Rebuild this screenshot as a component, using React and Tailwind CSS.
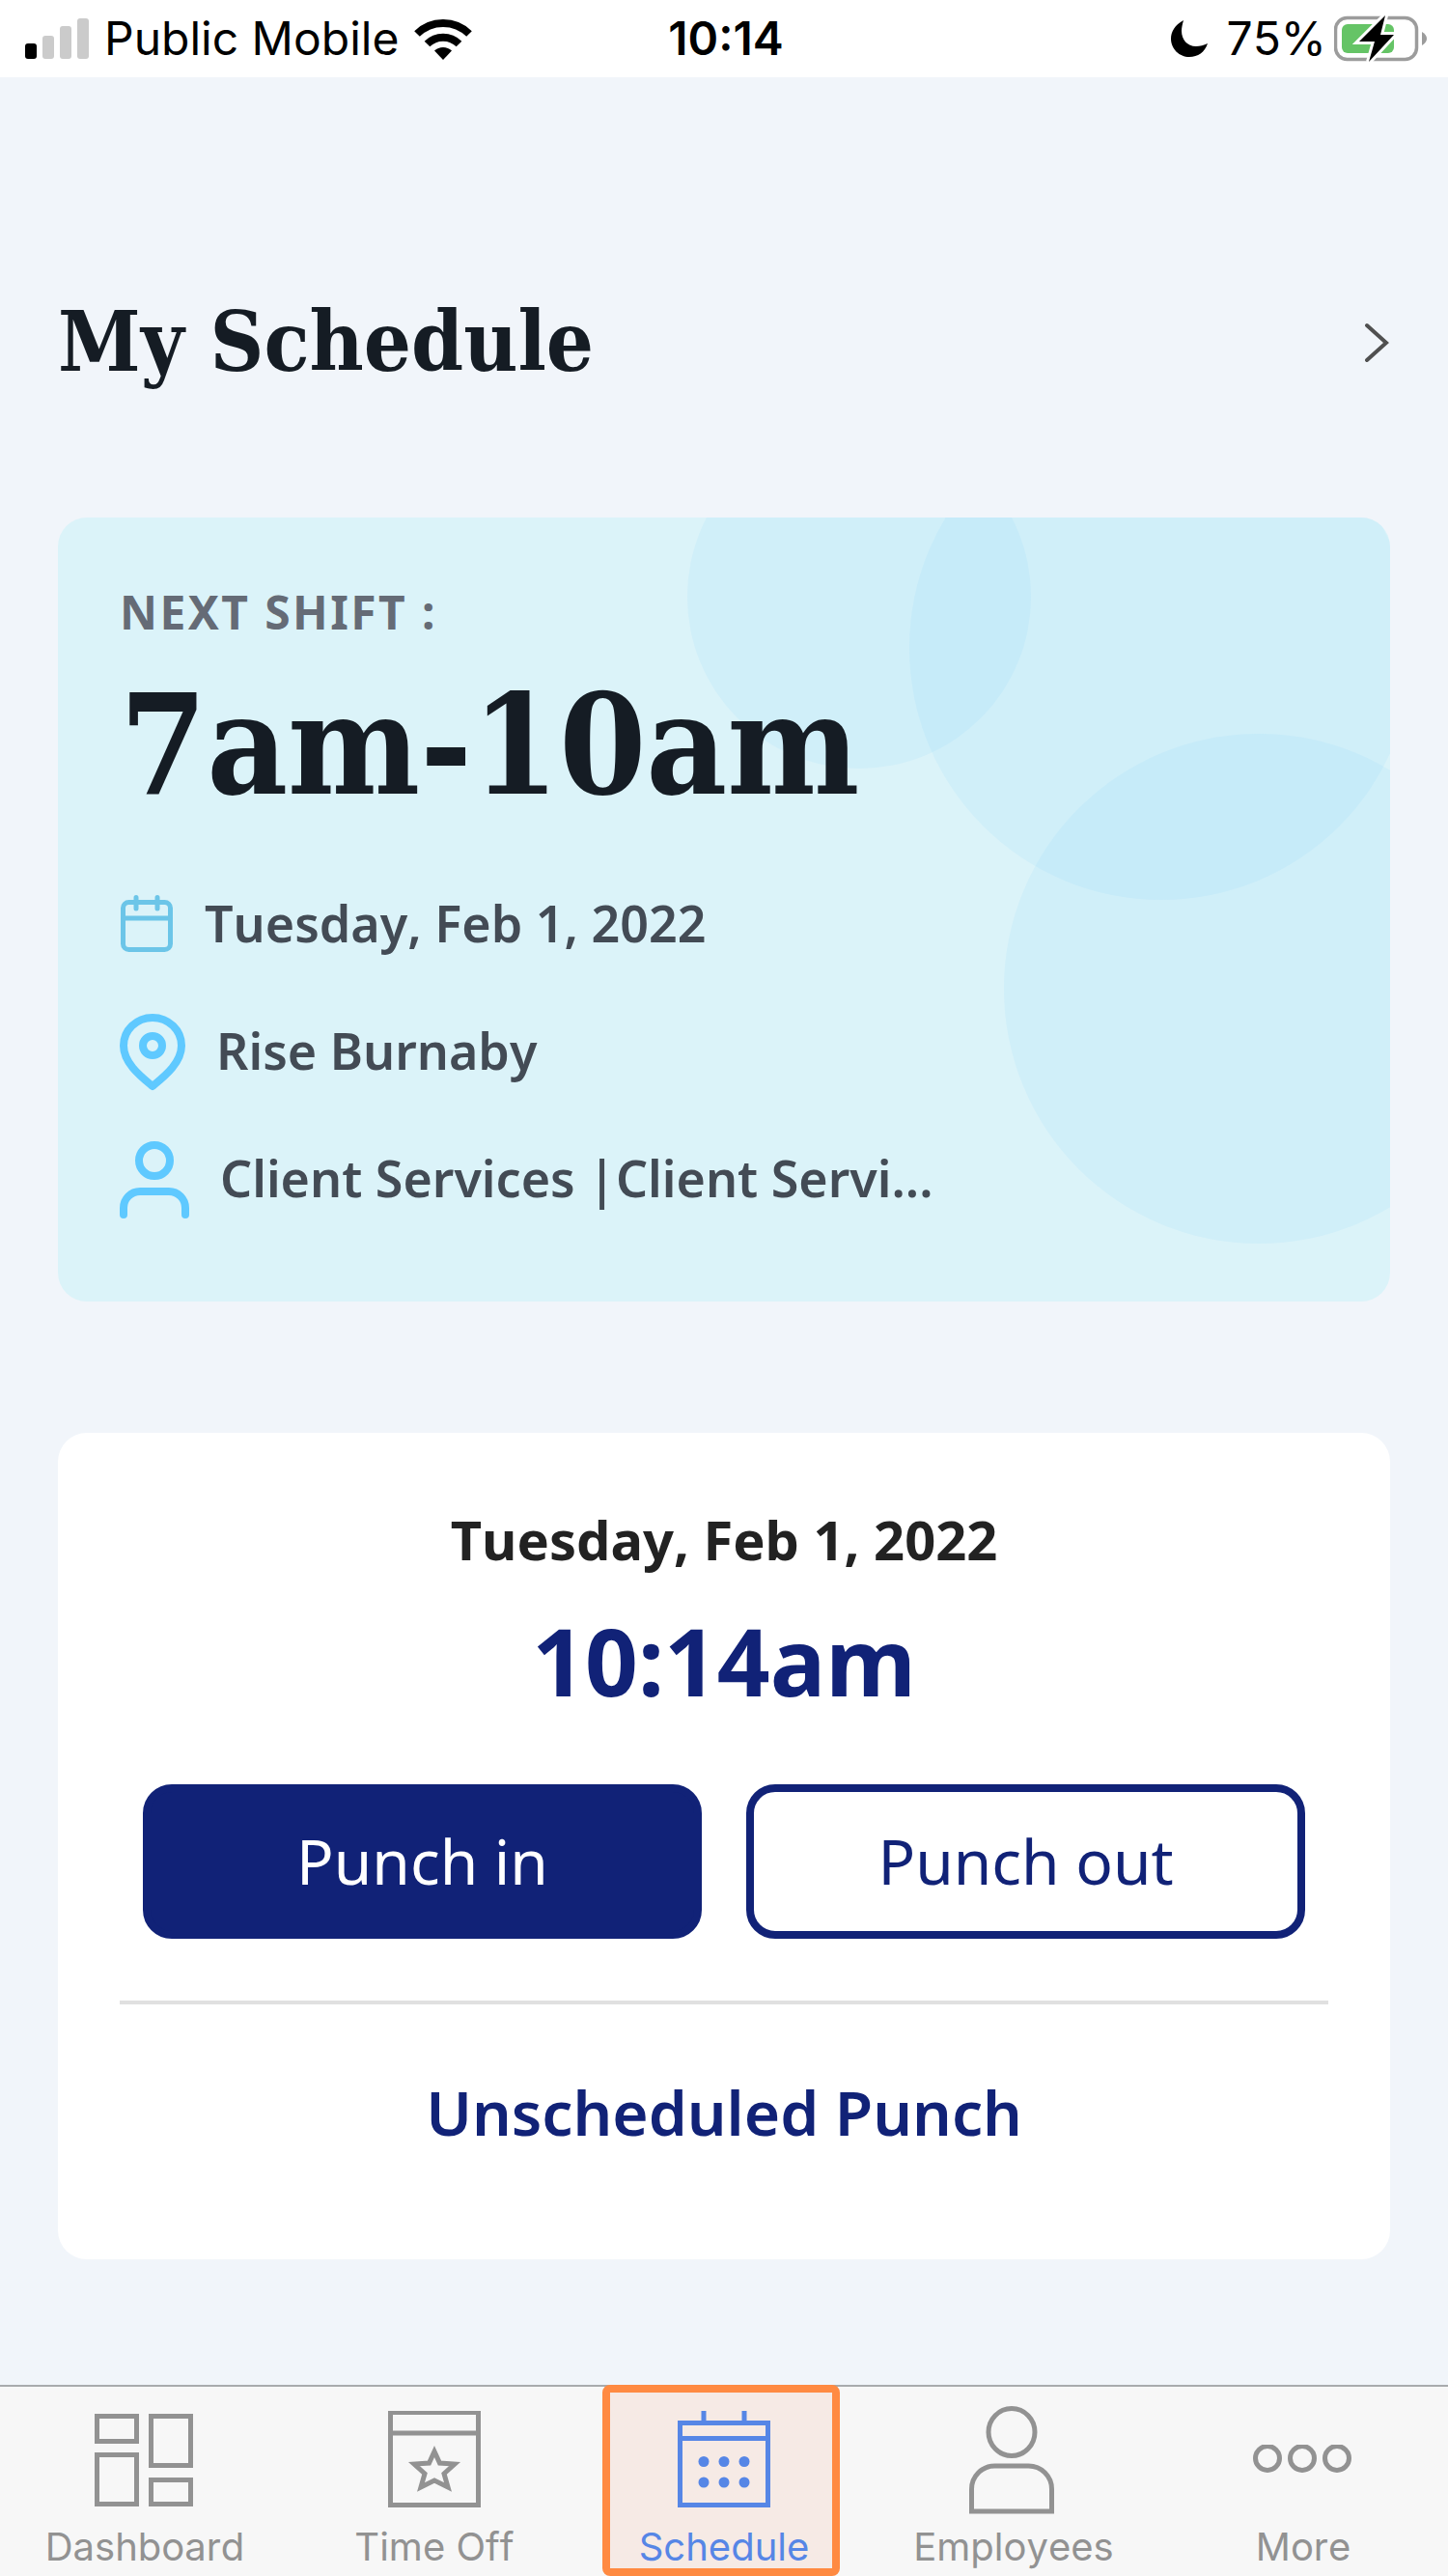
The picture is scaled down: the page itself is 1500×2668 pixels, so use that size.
const shiftCircles = [
  { cx: 830, cy: 82, r: 178 },
  { cx: 1143, cy: 135, r: 261 },
  { cx: 1244, cy: 488, r: 264 },
];

function SignalIcon() {
  return (
    <svg width="66" height="42" viewBox="0 0 66 42" aria-hidden>
      <rect x="0" y="26" width="12" height="16" rx="3" fill="#000" />
      <rect x="18" y="18" width="12" height="24" rx="3" fill="#cbcbcb" />
      <rect x="36" y="8" width="12" height="34" rx="3" fill="#cbcbcb" />
      <rect x="54" y="0" width="12" height="42" rx="3" fill="#cbcbcb" />
    </svg>
  );
}

function WifiIcon() {
  return (
    <svg width="60" height="44" viewBox="0 0 60 44" aria-hidden>
      <g fill="none" stroke="#000" strokeWidth="8">
        <path d="M3 17 A38.5 38.5 0 0 1 57 17" />
        <path d="M13.5 27.5 A23.5 23.5 0 0 1 46.5 27.5" />
      </g>
      <path d="M30 44 L21 34.5 A13 13 0 0 1 39 34.5 Z" />
    </svg>
  );
}

function MoonIcon() {
  return (
    <svg width="38" height="38" viewBox="0 0 38 38" aria-hidden>
      <path d="M13 0 C4 5 0 12 0 19 C0 30 9 38 19 38 C28 38 35 33 38 24 C34 26 30 27 26 27 C17 27 11 20 11 11 C11 7 12 4 13 0 Z" />
    </svg>
  );
}

function BatteryIcon() {
  return (
    <svg width="96" height="48" viewBox="0 0 96 48" aria-hidden>
      <rect x="1.5" y="2.5" width="84" height="43" rx="12" fill="none" stroke="#9c9c9c" strokeWidth="3.5" />
      <path d="M91 17 Q96 20 96 24 Q96 28 91 31 Z" fill="#9c9c9c" />
      <rect x="8" y="9" width="54" height="30" rx="6" fill="#65c466" />
      <path
        d="M53 0 L26 27 H42 L36 48 L62 20 H48 Z"
        fill="#000"
        stroke="#fff"
        strokeWidth="6"
        paintOrder="stroke"
      />
    </svg>
  );
}

function ChevronIcon() {
  return (
    <svg
      width="26"
      height="42"
      viewBox="0 0 26 42"
      fill="none"
      stroke="#505050"
      strokeWidth="4"
      strokeLinecap="round"
      aria-hidden
    >
      <path d="M2 4 L22 22 L2 40" />
    </svg>
  );
}

function DateIcon() {
  return (
    <svg
      width="56"
      height="60"
      viewBox="0 0 56 60"
      fill="none"
      stroke="#6cc5e8"
      strokeWidth="5"
      strokeLinecap="round"
      aria-hidden
    >
      <rect x="3.5" y="8.5" width="49" height="49" rx="6" />
      <path d="M4 25 H52 M17 3.5 V15 M39 3.5 V15" />
    </svg>
  );
}

function PinIcon() {
  return (
    <svg width="68" height="84" viewBox="0 0 68 84" fill="none" stroke="#5fc9ff" strokeWidth="8" aria-hidden>
      <path d="M34 79 C22 69 4 55 4 37 A30 29 0 0 1 64 37 C64 55 46 69 34 79 Z" strokeLinejoin="round" />
      <circle cx="34" cy="37" r="10" />
    </svg>
  );
}

function PersonIcon() {
  return (
    <svg
      width="72"
      height="84"
      viewBox="0 0 72 84"
      fill="none"
      stroke="#5fc9ff"
      strokeWidth="8"
      strokeLinecap="round"
      aria-hidden
    >
      <circle cx="36" cy="24" r="16" />
      <path d="M4 80 V73 A17 17 0 0 1 21 56 H51 A17 17 0 0 1 68 73 V80" />
    </svg>
  );
}

function DashboardTabIcon() {
  return (
    <svg width="104" height="96" viewBox="0 0 104 96" fill="none" stroke="currentColor" strokeWidth="5" aria-hidden>
      <rect x="2.5" y="2.5" width="41" height="26" />
      <rect x="2.5" y="42.5" width="41" height="51" />
      <rect x="58.5" y="2.5" width="41" height="51" />
      <rect x="58.5" y="68.5" width="41" height="25" />
    </svg>
  );
}

function TimeOffTabIcon() {
  return (
    <svg width="96" height="102" viewBox="0 0 96 102" fill="none" stroke="currentColor" strokeWidth="5" aria-hidden>
      <path d="M2.5 1.5 H93.5 V97.5 H2.5 Z M2.5 23 H93.5" />
      <path d="M48 42 L53.5 54 L69 55 L58 65 L62 79 L48 72 L34 79 L38 65 L27 55 L42.5 54 Z" />
    </svg>
  );
}

function ScheduleTabIcon() {
  return (
    <svg width="96" height="102" viewBox="0 0 96 102" fill="none" stroke="currentColor" strokeWidth="5" aria-hidden>
      <path d="M2.5 12.5 H93.5 V97.5 H2.5 Z M2.5 28.5 H93.5 M27 0 V12 M69 0 V12" />
      <g fill="currentColor" stroke="none">
        <circle cx="27" cy="52.5" r="5.5" />
        <circle cx="48" cy="52.5" r="5.5" />
        <circle cx="69" cy="52.5" r="5.5" />
        <circle cx="27" cy="74" r="5.5" />
        <circle cx="48" cy="74" r="5.5" />
        <circle cx="69" cy="74" r="5.5" />
      </g>
    </svg>
  );
}

function EmployeesTabIcon() {
  return (
    <svg width="92" height="112" viewBox="0 0 92 112" fill="none" stroke="currentColor" strokeWidth="5" aria-hidden>
      <ellipse cx="44" cy="27" rx="24" ry="24.5" />
      <path d="M2.5 109 V86 A24 24 0 0 1 26.5 62 H61.5 A24 24 0 0 1 85.5 86 V109 Z" />
    </svg>
  );
}

function MoreTabIcon() {
  return (
    <svg width="104" height="32" viewBox="0 0 104 32" fill="none" stroke="currentColor" strokeWidth="5" aria-hidden>
      <circle cx="15" cy="14" r="12.5" />
      <circle cx="51" cy="14" r="12.5" />
      <circle cx="87" cy="14" r="12.5" />
    </svg>
  );
}

const shiftDetails = [
  { icon: DateIcon, text: "Tuesday, Feb 1, 2022" },
  { icon: PinIcon, text: "Rise Burnaby" },
  { icon: PersonIcon, text: "Client Services |Client Servi..." },
];

const tabs = [
  { label: "Dashboard", icon: DashboardTabIcon },
  { label: "Time Off", icon: TimeOffTabIcon },
  { label: "Schedule", icon: ScheduleTabIcon, active: true },
  { label: "Employees", icon: EmployeesTabIcon },
  { label: "More", icon: MoreTabIcon },
];

function StatusBar() {
  return (
    <header className="grid h-20 grid-cols-[1fr_auto_1fr] items-center bg-white pr-[22px] pl-[26px] font-['Inter',sans-serif] text-[48px] leading-[48px] text-black">
      <div className="flex items-center gap-4">
        <SignalIcon />
        <span>Public Mobile</span>
        <WifiIcon />
      </div>
      <span className="font-semibold">10:14</span>
      <div className="flex items-center justify-end">
        <MoonIcon />
        <span className="mr-2 ml-5">75%</span>
        <BatteryIcon />
      </div>
    </header>
  );
}

function ShiftCard() {
  return (
    <section className="relative mt-[134px] overflow-hidden rounded-[30px] bg-[#dbf3f9] px-16 pt-[66px] pb-[88px]">
      <svg
        className="absolute top-0 right-0"
        width="1380"
        height="812"
        viewBox="0 0 1380 812"
        fill="#5fc9ff"
        fillOpacity="0.09"
        aria-hidden
      >
        {shiftCircles.map((c) => (
          <circle key={c.cx} cx={c.cx} cy={c.cy} r={c.r} />
        ))}
      </svg>
      <div className="relative">
        <h2 className="text-[48px] leading-[64px] font-bold tracking-wider text-[#656b76]">NEXT SHIFT :</h2>
        <p className="mt-[26px] font-['DejaVu_Serif_Condensed','DejaVu_Serif',serif] text-[144px] leading-[160px] font-bold text-[#151c24]">
          7am-10am
        </p>
        <ul className="mt-16 flex flex-col gap-[52px]">
          {shiftDetails.map(({ icon: Icon, text }) => (
            <li key={text} className="flex h-20 items-center gap-8">
              <Icon />
              <span className="text-[52px] leading-[80px] font-semibold text-[#434b55]">{text}</span>
            </li>
          ))}
        </ul>
      </div>
    </section>
  );
}

function PunchCard() {
  return (
    <section className="mt-[136px] rounded-[30px] bg-white px-16 pt-[70px] pb-[104px] text-center text-[#112277]">
      <h2 className="text-[56px] leading-[80px] font-bold text-[#222]">Tuesday, Feb 1, 2022</h2>
      <p className="mt-[30px] text-[96px] leading-[112px] font-bold">10:14am</p>
      <div className="mt-18 grid grid-cols-2 gap-[46px] px-6">
        <button
          type="button"
          className="h-40 rounded-[30px] border-8 border-[#112277] bg-[#112277] text-[64px] leading-[96px] text-white"
        >
          Punch in
        </button>
        <button
          type="button"
          className="h-40 rounded-[30px] border-8 border-[#112277] bg-white text-[64px] leading-[96px]"
        >
          Punch out
        </button>
      </div>
      <hr className="mt-16 border-t-4 border-[#e0e0e0]" />
      <a href="#unscheduled" className="mt-16 block text-[64px] leading-[96px] font-semibold">
        Unscheduled Punch
      </a>
    </section>
  );
}

function TabBar() {
  return (
    <nav className="grid grid-cols-5 border-t-2 border-[#a8abad] bg-[#f7f7f7] font-['Inter',sans-serif] text-[40px] leading-[48px] text-[#929292]">
      {tabs.map(({ label, icon: Icon, active }) => (
        <a
          key={label}
          href={`#${label}`}
          aria-current={active ? "page" : undefined}
          className={`relative flex flex-col items-center pt-5 pb-1.5 ${active ? "text-[#5686e6]" : ""}`}
        >
          {active && (
            <span className="absolute -top-0.5 right-[30px] bottom-0 left-6 rounded-lg border-8 border-[#ff8a42] bg-[#f6eae5]" />
          )}
          <span className="relative flex h-28 items-center">
            <Icon />
          </span>
          <span className="relative mt-2.5">{label}</span>
        </a>
      ))}
    </nav>
  );
}

export default function App() {
  return (
    <div className="flex min-h-screen flex-col bg-[#f1f5fa] font-['Noto_Sans',sans-serif] [font-kerning:none]">
      <StatusBar />
      <main className="flex-1 px-[60px] pt-[226px] pb-16">
        <div className="flex items-center justify-between">
          <h1 className="font-['DejaVu_Serif_Condensed','DejaVu_Serif',serif] text-[86px] leading-[96px] font-bold text-[#151c24]">
            My Schedule
          </h1>
          <a href="#schedule" aria-label="Open my schedule">
            <ChevronIcon />
          </a>
        </div>
        <ShiftCard />
        <PunchCard />
      </main>
      <TabBar />
    </div>
  );
}
